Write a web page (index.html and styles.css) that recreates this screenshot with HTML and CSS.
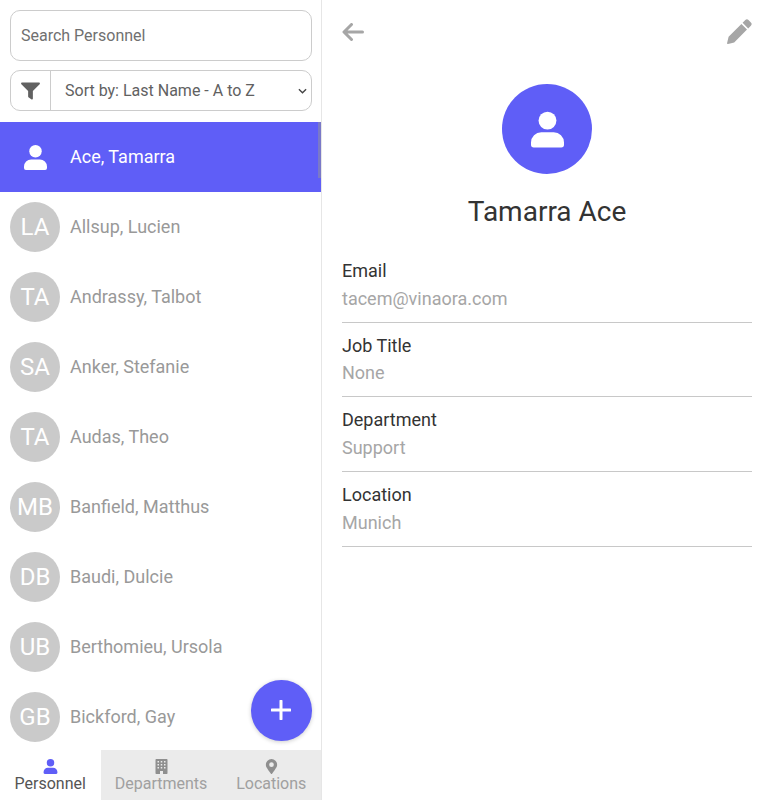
FILE: index.html
```html
<!DOCTYPE html>
<html lang="en">
<head>
<meta charset="UTF-8">
<meta name="viewport" content="width=device-width, initial-scale=1.0">
<title>Company Directory</title>
<link rel="stylesheet" href="styles.css">
</head>
<body>
  <div class="app">
    <aside class="sidebar">
      <div class="controls">
        <input class="search-input" type="text" placeholder="Search Personnel">
        <div class="sort-group">
          <span class="filter-btn">
            <svg class="filter-icon" viewBox="0 0 20 18"><path d="M1.2 0h17.6c1 0 1.5 1.2.8 1.9L12.5 9v8c0 .9-1 1.3-1.7.8l-3-2.3a1 1 0 0 1-.3-.7V9L.4 1.9C-.3 1.2.2 0 1.2 0z"/></svg>
          </span>
          <div class="sort-select">
            <span>Sort by: Last Name - A to Z</span>
            <svg class="chevron" viewBox="0 0 10 6"><path d="M1 1l4 4 4-4"/></svg>
          </div>
        </div>
      </div>

      <ul class="person-list">
        <li class="person active">
          <span class="avatar">
            <svg class="user-icon" viewBox="0 0 24 26"><circle cx="12" cy="6.5" r="6.5"/><path d="M7.5 15h9a7.5 7.5 0 0 1 7.5 7.5V24a2 2 0 0 1-2 2H2a2 2 0 0 1-2-2v-1.5A7.5 7.5 0 0 1 7.5 15z"/></svg>
          </span>
          <span class="person-name">Ace, Tamarra</span>
        </li>
        <li class="person"><span class="avatar">LA</span><span class="person-name">Allsup, Lucien</span></li>
        <li class="person"><span class="avatar">TA</span><span class="person-name">Andrassy, Talbot</span></li>
        <li class="person"><span class="avatar">SA</span><span class="person-name">Anker, Stefanie</span></li>
        <li class="person"><span class="avatar">TA</span><span class="person-name">Audas, Theo</span></li>
        <li class="person"><span class="avatar">MB</span><span class="person-name">Banfield, Matthus</span></li>
        <li class="person"><span class="avatar">DB</span><span class="person-name">Baudi, Dulcie</span></li>
        <li class="person"><span class="avatar">UB</span><span class="person-name">Berthomieu, Ursola</span></li>
        <li class="person"><span class="avatar">GB</span><span class="person-name">Bickford, Gay</span></li>
      </ul>

      <div class="scroll-thumb"></div>

      <button class="add-btn">
        <svg viewBox="0 0 20 20"><path d="M10 1v18M1 10h18"/></svg>
      </button>

      <nav class="tabs">
        <a class="tab tab-active" href="#">
          <svg class="tab-icon" viewBox="0 0 24 26"><circle cx="12" cy="6.5" r="6.5"/><path d="M7.5 15h9a7.5 7.5 0 0 1 7.5 7.5V24a2 2 0 0 1-2 2H2a2 2 0 0 1-2-2v-1.5A7.5 7.5 0 0 1 7.5 15z"/></svg>
          Personnel
        </a>
        <a class="tab tab-departments" href="#">
          <svg class="tab-icon" viewBox="0 0 12 15"><path fill-rule="evenodd" d="M.7 0h10.6c.4 0 .7.3.7.7v13.6c0 .4-.3.7-.7.7H7.5v-3h-3v3H.7a.7.7 0 0 1-.7-.7V.7C0 .3.3 0 .7 0zM2 2v1.5h1.5V2zm3.25 0v1.5h1.5V2zM8.500 2v1.5H10V2zM2 5v1.5h1.5V5zm3.25 0v1.5h1.5V5zM8.500 5v1.5H10V5zM2 8v1.5h1.5V8zm3.25 0v1.5h1.5V8zM8.500 8v1.5H10V8z"/></svg>
          Departments
        </a>
        <a class="tab tab-locations" href="#">
          <svg class="tab-icon" viewBox="0 0 12 16"><path fill-rule="evenodd" d="M5.4 15.7C.9 9.4 0 8 0 6a6 6 0 0 1 12 0c0 2-.9 3.4-5.4 9.700a.75.75 0 0 1-1.2 0zM6 8.500a2.500 2.500 0 1 0 0-5 2.500 2.500 0 0 0 0 5z"/></svg>
          Locations
        </a>
      </nav>
    </aside>

    <main class="detail">
      <div class="detail-top">
        <svg class="back-icon" viewBox="0 0 22 18"><path d="M9.5 1.5L2 9l7.5 7.5M2.5 9H20.5"/></svg>
        <svg class="edit-icon" viewBox="0 0 25 25"><path d="M18.3 1.1a2.3 2.3 0 0 1 3.2 0l2.4 2.4a2.3 2.3 0 0 1 0 3.2l-2.7 2.7-5.6-5.6zM14.4 5l5.6 5.6L7.2 23.4l-6.2 1.5a.7.7 0 0 1-.9-.9l1.5-6.2z"/></svg>
      </div>

      <div class="profile">
        <span class="profile-avatar">
          <svg class="user-icon-lg" viewBox="0 0 24 26"><circle cx="12" cy="6.5" r="6.5"/><path d="M7.5 15h9a7.5 7.5 0 0 1 7.5 7.5V24a2 2 0 0 1-2 2H2a2 2 0 0 1-2-2v-1.5A7.5 7.5 0 0 1 7.5 15z"/></svg>
        </span>
        <h1 class="profile-name">Tamarra Ace</h1>
      </div>

      <div class="field">
        <div class="field-label">Email</div>
        <div class="field-value">tacem@vinaora.com</div>
      </div>
      <div class="field">
        <div class="field-label">Job Title</div>
        <div class="field-value">None</div>
      </div>
      <div class="field">
        <div class="field-label">Department</div>
        <div class="field-value">Support</div>
      </div>
      <div class="field">
        <div class="field-label">Location</div>
        <div class="field-value">Munich</div>
      </div>
    </main>
  </div>
</body>
</html>
```

FILE: styles.css
```css
* {
  margin: 0;
  padding: 0;
  box-sizing: border-box;
}

body {
  font-family: Roboto, Arial, sans-serif;
  color: #333;
  background-color: white;
  height: 800px;
  overflow: hidden;
}

.app {
  display: flex;
  height: 800px;
}

/* Left column */
.sidebar {
  position: relative;
  width: 322px;
  height: 800px;
  flex-shrink: 0;
  border-right: 1px solid #e6e6e6;
  display: flex;
  flex-direction: column;
  overflow: hidden;
}

.controls {
  padding: 10px 9.5px 11px 10px;
  display: flex;
  flex-direction: column;
  gap: 9px;
}

.search-input {
  width: 100%;
  height: 51px;
  padding: 0 10px;
  font-family: inherit;
  font-size: 16px;
  color: #6c757d;
  border: 1px solid #ccc;
  border-radius: 10px;
  outline: none;
}

.search-input::placeholder {
  color: #707070;
  opacity: 1;
}

.sort-group {
  display: flex;
  height: 41px;
  border: 1px solid #ccc;
  border-radius: 10px;
}

.filter-btn {
  width: 40px;
  display: flex;
  justify-content: center;
  padding-top: 11px;
  border-right: 1px solid #ccc;
}

.filter-icon {
  width: 19px;
  height: 18px;
  fill: #616161;
}

.sort-select {
  flex: 1;
  display: flex;
  align-items: center;
  justify-content: space-between;
  padding: 0 4px 0 14px;
  font-size: 16px;
  color: #616161;
}

.chevron {
  width: 9px;
  height: 6px;
  fill: none;
  stroke: #444;
  stroke-width: 1.5;
}

.person-list {
  list-style: none;
  flex: 1;
  overflow: hidden;
}

.person {
  height: 70px;
  display: flex;
  align-items: center;
  padding-left: 10px;
  color: #999;
  font-size: 18px;
}

.person.active {
  background-color: #5f5ef7;
  color: white;
}

.avatar {
  width: 50px;
  height: 50px;
  border-radius: 50%;
  background-color: #cacaca;
  color: white;
  font-size: 24px;
  display: flex;
  align-items: center;
  justify-content: center;
  flex-shrink: 0;
}

.person.active .avatar {
  background-color: transparent;
}

.user-icon {
  width: 23px;
  height: 25px;
  fill: white;
}

.person-name {
  margin: 0 0 2px 10px;
}

.scroll-thumb {
  position: absolute;
  top: 122px;
  right: 0;
  width: 3px;
  height: 56px;
  background-color: #7a79c8;
}

.add-btn {
  position: absolute;
  right: 9.5px;
  bottom: 59.5px;
  width: 60.5px;
  height: 60.5px;
  border: none;
  border-radius: 50%;
  background-color: #5f5ef7;
  box-shadow: 0 1px 4px rgba(0, 0, 0, 0.2);
  display: flex;
  align-items: center;
  justify-content: center;
}

.add-btn svg {
  width: 20px;
  height: 20px;
  fill: none;
  stroke: white;
  stroke-width: 3;
  stroke-linecap: round;
}

.tabs {
  display: flex;
  height: 50px;
  flex-shrink: 0;
}

.tab {
  display: flex;
  flex-direction: column;
  align-items: center;
  justify-content: flex-end;
  padding-bottom: 7px;
  font-size: 16px;
  line-height: 19px;
  text-decoration: none;
  color: #a0a0a0;
  background-color: #ebebeb;
  fill: #8f8f8f;
}

.tab-active {
  width: 100.5px;
  background-color: white;
  color: #555;
  fill: #5f5ef7;
}

.tab-departments {
  width: 121px;
}

.tab-locations {
  flex: 1;
}

.tab-icon {
  height: 15px;
  width: 15px;
}

/* Right column */
.detail {
  flex: 1;
  padding: 0 16px 0 20px;
}

.detail-top {
  display: flex;
  justify-content: space-between;
  align-items: flex-start;
  padding-top: 19px;
  height: 84px;
}

.back-icon {
  width: 22px;
  height: 18px;
  margin-top: 4px;
  fill: none;
  stroke: #a6a6a6;
  stroke-width: 3;
  stroke-linecap: round;
  stroke-linejoin: round;
}

.edit-icon {
  width: 25px;
  height: 25px;
  fill: #a6a6a6;
}

.profile {
  display: flex;
  flex-direction: column;
  align-items: center;
  margin-bottom: 19px;
}

.profile-avatar {
  width: 90px;
  height: 90px;
  border-radius: 50%;
  background-color: #5f5ef7;
  display: flex;
  align-items: center;
  justify-content: center;
}

.user-icon-lg {
  width: 33px;
  height: 37px;
  fill: white;
}

.profile-name {
  margin-top: 21px;
  font-size: 28px;
  font-weight: 400;
  line-height: 34px;
  color: #333;
}

.field {
  height: 74.7px;
  padding-top: 11px;
  border-bottom: 1px solid #c8c8c8;
}

.field-label {
  font-size: 18px;
  line-height: 24px;
  color: #333;
}

.field-value {
  margin-top: 3.5px;
  font-size: 18px;
  line-height: 24px;
  color: #a6a6a6;
}
```
